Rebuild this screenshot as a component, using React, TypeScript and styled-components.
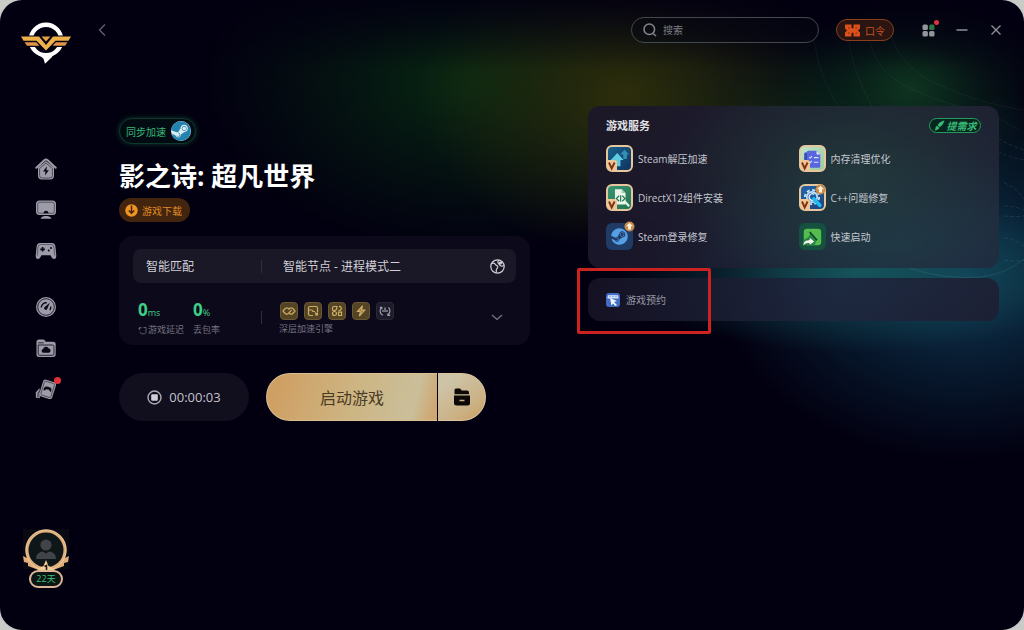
import React from "react";
import styled, { createGlobalStyle } from "styled-components";
import { FaSteam } from "react-icons/fa";

const GlobalStyle = createGlobalStyle`
  *, *::before, *::after { box-sizing: border-box; }
  body {
    margin: 0;
    background: #c9cbc9;
    font-family: "Open Sans", "Noto Sans", "Noto Sans CJK SC", sans-serif;
    color: #d3d3dc;
  }
  button, input { font: inherit; color: inherit; }
  button { border: 0; padding: 0; background: none; cursor: pointer; }
  h1, h2, p, ul, dl, dd { margin: 0; padding: 0; }
  ul { list-style: none; }
  svg { display: block; flex: none; }
`;

const Window = styled.div`
  position: relative;
  isolation: isolate;
  display: grid;
  grid-template-columns: 92px 1fr;
  min-height: 100vh;
  border-radius: 22px;
  overflow: hidden;
  background:
    linear-gradient(rgba(2, 0, 16, 0.85), transparent 11%),
    radial-gradient(ellipse 13% 15% at 89% 14%, rgba(18, 66, 36, 0.75), rgba(18, 66, 36, 0.28) 50%, transparent),
    radial-gradient(ellipse 20% 25% at 61% 15%, rgba(52, 50, 10, 0.85), rgba(52, 50, 10, 0.4) 50%, transparent),
    radial-gradient(ellipse 26% 27% at 46% 13%, rgba(8, 44, 18, 0.9), rgba(8, 44, 18, 0.4) 50%, transparent),
    radial-gradient(ellipse 25% 20% at 78% 24%, rgba(10, 56, 30, 0.7), rgba(10, 56, 30, 0.3) 50%, transparent),
    radial-gradient(ellipse 24% 13% at 84% 43%, rgba(22, 88, 94, 0.95), rgba(22, 88, 94, 0.4) 50%, transparent),
    radial-gradient(ellipse 24% 29% at 94% 44%, rgba(16, 64, 92, 0.85), rgba(16, 64, 92, 0.4) 50%, transparent),
    #020010;
`;

const Waves = styled.svg`
  position: absolute;
  z-index: -1;
  top: 0;
  right: 0;
  fill: none;
  stroke: rgba(130, 190, 200, 0.13);
`;

const Sidebar = styled.aside`
  display: flex;
  flex-direction: column;
  align-items: center;
  padding: 20px 0 42px;
`;

const Nav = styled.nav`
  display: flex;
  flex-direction: column;
  gap: 32px;
  margin-top: 92px;
`;

const NavGroup = styled.ul`
  display: grid;
  gap: 17px;
`;

const NavButton = styled.button`
  position: relative;
  display: grid;
  place-items: center;
  width: 24px;
  height: 24px;
`;

const Dot = styled.span<{ $size: number }>`
  position: absolute;
  top: ${(p) => (p.$size > 6 ? 0 : -2)}px;
  right: -3px;
  width: ${(p) => p.$size}px;
  height: ${(p) => p.$size}px;
  border-radius: 50%;
  background: #e2303b;
`;

const Profile = styled.button`
  display: flex;
  flex-direction: column;
  align-items: center;
  margin-top: auto;
`;

const Days = styled.span`
  width: 34px;
  margin-top: -4px;
  border: 2px solid #dcb795;
  border-radius: 9px;
  background: #0c1514;
  color: #35c274;
  font-size: 9px;
  line-height: 14px;
  text-align: center;
`;

const Main = styled.main`
  min-width: 0;
  padding-right: 20px;
`;

const TopBar = styled.header`
  display: flex;
  align-items: center;
  height: 60px;
  color: #8f9099;
`;

const BackButton = styled.button`
  display: grid;
  place-items: center;
  width: 20px;
  height: 24px;
  margin-right: auto;
  color: #5c5b69;
`;

const SearchBox = styled.label`
  display: flex;
  align-items: center;
  gap: 6px;
  width: 188px;
  height: 26px;
  padding: 0 11px;
  border: 1px solid #43484c;
  border-radius: 13px;
  background: rgba(8, 10, 20, 0.4);
  input {
    min-width: 0;
    flex: 1;
    padding: 0;
    border: 0;
    outline: 0;
    background: none;
    font-size: 10px;
  }
  input::placeholder { color: #7d7f84; opacity: 1; }
`;

const CodeButton = styled.button`
  display: flex;
  align-items: center;
  justify-content: center;
  gap: 5px;
  width: 58px;
  height: 22px;
  margin: 0 26px 0 17px;
  border: 1px solid #8a3e1c;
  border-radius: 11px;
  background: #2a1512;
  color: #c9531f;
  font-size: 10px;
`;

const WindowControls = styled.div`
  display: flex;
  gap: 18px;
`;

const ControlButton = styled.button`
  position: relative;
  display: grid;
  place-items: center;
  width: 16px;
  height: 16px;
`;

const Columns = styled.div`
  display: grid;
  grid-template-columns: 1fr 1fr;
  gap: 58px;
  align-items: start;
  padding: 46px 5px 0 27px;
`;

const GamePanel = styled.section`
  display: flex;
  flex-direction: column;
  align-items: flex-start;
  padding-top: 12px;
`;

const SyncBadge = styled.button`
  display: flex;
  align-items: center;
  gap: 5px;
  height: 26px;
  padding: 0 4px 0 6px;
  border: 1px solid #0d3a2b;
  border-radius: 13px;
  background: #030b12;
  box-shadow: 0 0 4px 1px rgba(22, 94, 60, 0.4);
  color: #37b877;
  font-size: 10px;
`;

const SteamMark = styled.span`
  display: grid;
  place-items: center;
  width: 20px;
  height: 20px;
  border-radius: 50%;
  background: #dcebf3;
  color: #2382ae;
`;

const Title = styled.h1`
  margin-top: 14px;
  color: #fff;
  font-size: 26px;
  font-weight: 700;
  line-height: 36px;
`;

const DownloadButton = styled.button`
  display: flex;
  align-items: center;
  gap: 4px;
  height: 24px;
  margin-top: 4px;
  padding: 0 8px 0 6px;
  border-radius: 12px;
  background: #42240f;
  color: #e08b22;
  font-size: 10px;
`;

const RouteCard = styled.div`
  width: 100%;
  margin-top: 14px;
  padding: 13px 14px 9px;
  border-radius: 14px;
  background: #0c091b;
`;

const RouteRow = styled.div`
  display: grid;
  grid-template-columns: 128px 1px 1fr 38px;
  align-items: center;
  height: 34px;
  border-radius: 8px;
  background: #1a1726;
  color: #d0cfd8;
  font-size: 12px;
`;

const RouteButton = styled.button<{ $indent: number }>`
  padding-left: ${(p) => p.$indent}px;
  text-align: left;
`;

const IconButton = styled.button`
  display: grid;
  place-items: center;
  height: 24px;
`;

const Divider = styled.span`
  height: 13px;
  background: #302d3c;
`;

const StatsRow = styled.div`
  display: grid;
  grid-template-columns: 128px 1px 1fr 38px;
  align-items: center;
  margin-top: 16px;
  color: #74737f;
`;

const Stats = styled.dl`
  display: flex;
  gap: 9px;
  padding-left: 5px;
`;

const Stat = styled.div`
  display: flex;
  flex-direction: column-reverse;
`;

const StatValue = styled.dd`
  color: #3fce85;
  font-size: 9px;
  line-height: 22px;
  strong { font-size: 17px; }
`;

const Caption = styled.dt`
  display: flex;
  align-items: center;
  gap: 1px;
  font-size: 9px;
  line-height: 12px;
  white-space: nowrap;
`;

const Engine = styled.div`
  padding-left: 17px;
  p { font-size: 9px; line-height: 12px; }
`;

const EngineIcons = styled.ul`
  display: flex;
  gap: 6px;
  height: 22px;
  padding: 1px 0 0 1px;
`;

const EngineTile = styled.li<{ $off?: boolean }>`
  display: grid;
  place-items: center;
  width: 18px;
  height: 18px;
  border: 1px solid ${(p) => (p.$off ? "#2b2937" : "#6b5833")};
  border-radius: 4px;
  background: ${(p) => (p.$off ? "#1d1a2a" : "#544426")};
  color: ${(p) => (p.$off ? "#a2a1ad" : "#cfae64")};
`;

const Actions = styled.div`
  display: flex;
  gap: 17px;
  margin-top: 28px;
`;

const TimerButton = styled.button`
  display: flex;
  align-items: center;
  justify-content: center;
  gap: 7px;
  width: 130px;
  height: 48px;
  border-radius: 24px;
  background: #110e1e;
  color: #c4c3cc;
  font-size: 13px;
`;

const LaunchGroup = styled.div`
  display: flex;
  gap: 1px;
`;

const LaunchButton = styled.button`
  width: 171px;
  height: 48px;
  border: 1px solid #dcbe94;
  border-right: 0;
  border-radius: 24px 0 0 24px;
  background: linear-gradient(105deg, #cfa064 8%, #cdb482 50%, #cabf9a 85%, #cfa772 97%);
  color: #4a3b25;
  font-size: 16px;
`;

const FolderButton = styled.button`
  display: grid;
  place-items: center;
  width: 48px;
  height: 48px;
  border: 1px solid #dcc59e;
  border-left: 0;
  border-radius: 0 24px 24px 0;
  background: linear-gradient(145deg, #cdc3a6 20%, #cbb184 70%, #c99d60);
`;

const ServicePanel = styled.div`
  display: grid;
  gap: 10px;
`;

const ServiceCard = styled.section`
  height: 162px;
  padding: 12px 18px;
  border-radius: 12px;
  background:
    radial-gradient(ellipse 45% 75% at 64% 42%, rgba(38, 72, 66, 0.6), transparent),
    radial-gradient(ellipse 55% 60% at 75% 85%, rgba(32, 68, 86, 0.5), transparent),
    linear-gradient(100deg, rgba(27, 23, 42, 0.94), rgba(34, 34, 54, 0.88));
`;

const CardHead = styled.div`
  display: flex;
  justify-content: space-between;
  align-items: center;
  height: 15px;
  h2 { color: #e2e2e6; font-size: 11px; font-weight: 700; line-height: 15px; }
`;

const RequestButton = styled.button`
  display: flex;
  align-items: center;
  justify-content: center;
  gap: 2px;
  width: 52px;
  height: 15px;
  border: 1px solid #279a5c;
  border-radius: 8px;
  background: #06251f;
  color: #37b874;
  font-size: 10px;
  font-style: italic;
  font-weight: 700;
  line-height: 12px;
  white-space: nowrap;
`;

const ServiceGrid = styled.ul`
  display: grid;
  grid-template-columns: 1fr 1fr;
  gap: 12px 10px;
  margin-top: 12px;
`;

const ServiceButton = styled.button`
  display: flex;
  align-items: center;
  gap: 5px;
  color: #c5c8d0;
  font-size: 10px;
  line-height: 16px;
`;

const Tile = styled.span<{ $bg: string; $gold?: boolean }>`
  position: relative;
  display: grid;
  place-items: center;
  width: 27px;
  height: 27px;
  border: ${(p) => (p.$gold ? "2px solid #e6c69c" : "0")};
  border-radius: 6px;
  background: ${(p) => p.$bg};
`;

const VipCorner = styled.svg`
  position: absolute;
  left: -1px;
  bottom: -1px;
`;

const UpBadge = styled.svg`
  position: absolute;
  top: -2px;
  right: -2px;
`;

const BookingCard = styled.section`
  position: relative;
  display: flex;
  align-items: center;
  height: 43px;
  padding: 0 18px;
  border-radius: 12px;
  background: linear-gradient(100deg, rgba(22, 18, 36, 0.95), rgba(30, 38, 62, 0.9) 60%, rgba(30, 30, 50, 0.9));
`;

const BookingButton = styled.button`
  display: flex;
  align-items: center;
  gap: 6px;
  color: #9a9ba6;
  font-size: 10px;
`;

const Highlight = styled.span`
  position: absolute;
  top: -10px;
  left: -11px;
  width: 134px;
  height: 66px;
  border: 3px solid #cc2320;
  border-radius: 2px;
  pointer-events: none;
`;

const grey = "#9c9ba8";
const dark = "#0b0919";
const seam = "#45434f";

const navIcons: Record<string, React.ReactNode> = {
  首页: (
    <>
      <path d="M3 9.500v8q0 4 4 4h8q4 0 4-4v-8L11 3Z" fill={grey} />
      <path d="M1.300 9.800 9.300 2.200q1.700-1.300 3.400 0l8 7.600" fill="none" stroke={grey} strokeWidth="2" strokeLinecap="round" strokeLinejoin="round" />
      <path d="M4.600 10.500 11 5l6.400 5.500v7q0 2.500-2.500 2.500H7.100q-2.500 0-2.500-2.500Z" fill="none" stroke={seam} strokeWidth=".9" />
      <path d="m11.900 8.300-3.900 5.200h2.400l-.4 4 3.900-5.300h-2.500Z" fill={dark} />
    </>
  ),
  电脑: (
    <>
      <rect x="1" y="1.500" width="20" height="14.500" rx="3.500" fill={grey} />
      <rect x="2.700" y="3.200" width="16.600" height="11.100" rx="2" fill="none" stroke={seam} strokeWidth=".8" />
      <path d="M8.500 14.300a2.500 2.500 0 0 1 5 0Z" fill={dark} />
      <path d="M9.500 17h3q3.500.8 3.800 2.800H5.700Q6 17.800 9.500 17Z" fill={grey} />
    </>
  ),
  手柄: (
    <>
      <path d="M5 3h12q3 0 3.500 4l.8 8.500q0 3.500-2.300 3.500-1.600 0-2.500-2l-1-1.800h-9L5.500 17q-.9 2-2.500 2Q.7 19 .7 15.500L1.500 7Q2 3 5 3Z" fill={grey} />
      <path d="M2.300 15.500 3 7.500q.4-3 2.700-3h10.600q2.300 0 2.700 3l.7 8" fill="none" stroke={seam} strokeWidth=".7" />
      <path d="M7.600 7v4.600M5.300 9.300h4.600" stroke={dark} strokeWidth="1.700" />
      <circle cx="16" cy="8" r="1" fill={dark} />
      <circle cx="13.700" cy="10.400" r="1" fill={dark} />
    </>
  ),
  测速: (
    <>
      <circle cx="11" cy="11" r="10" fill={grey} />
      <circle cx="11" cy="11" r="8.300" fill="none" stroke={dark} strokeWidth=".8" />
      <path d="M6.300 11.500a4.700 4.700 0 0 1 5.500-4.600M15.700 10.500q.2 2-.8 3.500" fill="none" stroke={dark} strokeWidth="1.400" />
      <path d="m14.800 6.800-2.400 5.800a1.700 1.700 0 1 1-2.800-1.700Z" fill={dark} />
    </>
  ),
  文件: (
    <>
      <path d="M1.500 17.500V5Q1.500 2.500 4 2.500h4q1.300 0 1.900 1.100l.7 1.200H18q2.700 0 2.700 2.700v9.800q0 2.700-2.700 2.700H4.200q-2.700 0-2.700-2.500Z" fill={grey} />
      <path d="M3.200 5.800h5.500M3.200 8h14.300q1.500 0 1.500 1.500v7.300q0 1.500-1.500 1.500H4.700q-1.500 0-1.500-1.500Z" fill="none" stroke={dark} strokeWidth=".8" />
      <path d="M8.200 15.800a2 2 0 0 1-.1-3.900 2.900 2.900 0 0 1 5.300-.7 2.400 2.400 0 0 1 .7 4.600Z" fill={dark} />
    </>
  ),
  活动: (
    <>
      <path d="M4.500 10 .8 14.500v5.200l4 .5Z" fill={grey} />
      <path d="m4.500 13-1.500 2.500v4" fill="none" stroke={dark} strokeWidth=".8" />
      <rect x="6" y="2.500" width="13.500" height="17.500" rx="2.600" transform="rotate(17 12.500 11)" fill={grey} />
      <rect x="7.500" y="4" width="10.500" height="14.500" rx="1.500" transform="rotate(17 12.500 11)" fill="none" stroke={seam} strokeWidth=".8" />
      <path d="M9.900 8.700q3.200-1 6.200 1.200.7 1.700 0 3.900-.8.500-2.200-2l-2.200-.5q-2.500 1.600-3.200.9-.2-2 1.400-3.500Z" fill={dark} />
    </>
  ),
};

function NavItem({ name, dot }: { name: string; dot?: boolean }) {
  return (
    <li>
      <NavButton type="button" aria-label={name}>
        <svg width="22" height="22" viewBox="0 0 22 22">{navIcons[name]}</svg>
        {dot && <Dot $size={7} />}
      </NavButton>
    </li>
  );
}

function Logo() {
  return (
    <svg width="50" height="45" viewBox="0 0 50 45" role="img" aria-label="logo">
      <circle cx="25" cy="20" r="15.300" fill="none" stroke="#fff" strokeWidth="4.400" />
      <path d="M17 34h15l-1 3-7 6.800-1.500-5Z" fill="#fff" />
      <path d="M0 15.500h20l5 6.500 5-6.500h20l-4 11.500H33L25 32l-8-5H4Z" fill="#020010" />
      <path d="M0 16.500h18l7 8.500 7-8.500h18l-2.500 4.300H34.500L25 30.500l-9.500-9.700H2.500Z" fill="#eeb04a" />
      <path d="M3.500 22.300h11.700l3.300 3.400H6ZM46.500 22.300H34.800l-3.300 3.400H44Z" fill="#e29448" />
      <path d="M20.500 16.500h9L25 21.500Z" fill="#e6a03c" />
    </svg>
  );
}

function Avatar() {
  return (
    <svg width="48" height="45" viewBox="0 0 48 45" role="img" aria-label="头像">
      <path d="M1 0h46v40H1Z" fill="#080911" />
      <path d="m1 27 4 2 5 4 7 5 4 4h6l4-4 7-5 5-4 4-2-1 6-4 1v3l-8 3-7 3.500h-6L14 40l-8-3v-3l-4-1Z" fill="#e0ad76" />
      <circle cx="24" cy="21" r="19" fill="#0e1618" stroke="#dfb07d" strokeWidth="3" />
      <circle cx="24" cy="21" r="20.200" fill="none" stroke="#f5d9b0" strokeWidth=".7" />
      <circle cx="24" cy="16" r="5.600" fill="#404348" />
      <path d="M14 30q0-7 7-7.500l3 2 3-2q7 .5 7 7.500Z" fill="#404348" />
      <path d="m24 31 2.500 6 5.500 2.500-5.500 4.500h-5L16 39.500l5.500-2.500Z" fill="#f2cd98" />
      <path d="m22.500 37.500 2-1V43" fill="none" stroke="#271b13" strokeWidth="1.600" />
    </svg>
  );
}

const engineIcons = [
  <path key="a" d="M7.500 5.500 6 4.200q-1.200-.8-2.400 0L1.500 6.200q-.8.800 0 1.600l2.100 2q1.200.8 2.400 0l3.500-3.600M6.500 8.500 8 9.800q1.200.8 2.400 0l2.100-2q.8-.8 0-1.600l-2.100-2q-1.200-.8-2.400 0L6.500 5.700" />,
  <path key="b" d="M7 11.500H4Q2.500 11.500 2.500 10V4Q2.500 2.500 4 2.500h6Q11.500 2.500 11.500 4v4M3 6h2.500q1.500 0 1.500 1.500h2M9 8.500l2.500 2.500M11.500 8.500V11H9" />,
  <path key="c" d="M7 2.500H4Q2.500 2.500 2.500 4v2L4 7l2.500-1.500ZM9 2.500a2 2 0 1 1-.5 3.800M2.500 9.500a2 2 0 1 0 4 0 2 2 0 0 0-4 0M8.500 8.200h3v3.300h-3Z" />,
  <path key="d" d="M8.500 1.800 3.500 7.500h3L5.300 12.200l5.400-6h-3.200Z" fill="currentColor" fillOpacity=".5" />,
  <path key="e" d="M3.500 3.300a5 5 0 0 0 1.300 8M10.500 3.300a5 5 0 0 1-1.300 8M1.800 3.300h2v2M12.200 11.300h-2v-2M7 3.500v4.500M5 6v2M9 6v2" />,
];

function Vip() {
  return (
    <VipCorner width="11" height="11" viewBox="0 0 11 11">
      <path d="M0 0h7q3 0 3 3v7H3q-3 0-3-3Z" fill="#f0c696" />
      <path d="m2 2.500 2.700 6 2.900-6" fill="none" stroke="#7c3214" strokeWidth="1.900" />
    </VipCorner>
  );
}

function Up() {
  return (
    <UpBadge width="11" height="11" viewBox="0 0 11 11">
      <circle cx="5.500" cy="5.500" r="5" fill="#c68a4c" />
      <path d="M5.500 1.800 9 5.300H7v3.200H4V5.300H2Z" fill="#fff0d5" />
    </UpBadge>
  );
}

const services = [
  {
    name: "Steam解压加速", bg: "linear-gradient(135deg,#17618c,#12335f)", gold: true,
    art: (
      <>
        <path d="M9 5.500 16 13h-3.500v7h-6v-7H2Z" fill="#5ecbe0" />
        <path d="m17 2 5 5h-2.500v5h-4V7H12Z" fill="#318fb0" />
      </>
    ),
  },
  {
    name: "内存清理优化", bg: "linear-gradient(135deg,#bde3c5,#9dcaa4)", gold: true,
    art: (
      <>
        <path d="M5 5h5v15H5q-1.500 0-1.500-1.500V6.500Q3.500 5 5 5Z" fill="#3c49b8" />
        <path d="M8 3h9l4 4v13q0 1.500-1.500 1.500H8Q6.500 21.500 6.500 20V4.500Q6.500 3 8 3Z" fill="#5866df" />
        <path d="m17 3 4 4h-4Z" fill="#e5eaff" />
        <path d="m9 10 1 1 2-2M14 10.500h5M9 15l1 1 2-2M14 15.500h5" fill="none" stroke="#dfe5ff" strokeWidth="1.200" />
      </>
    ),
  },
  {
    name: "DirectX12组件安装", bg: "linear-gradient(135deg,#399472,#247453)", gold: true,
    art: (
      <>
        <path d="M6.500 2.500h7.500l4 4V19H6.500Z" fill="#eaf5e9" />
        <path d="m14 2.500 4 4h-4Z" fill="#98c8a8" />
        <path d="m11 9.500-3 3 3 3M12.700 9v7M14.500 9.500l3 3-3 3" fill="none" stroke="#267553" strokeWidth="1.300" />
        <path d="m17 15.500 5 5.500" stroke="#eaf5e9" strokeWidth="2.200" />
      </>
    ),
  },
  {
    name: "C++问题修复", bg: "linear-gradient(135deg,#2364a8,#1d447d)", gold: true, up: true,
    art: (
      <>
        <circle cx="12" cy="11" r="7.800" fill="none" stroke="#c5e3fa" strokeWidth="2" strokeDasharray="3.500 2.600" />
        <circle cx="12" cy="11" r="5.700" fill="#205ba0" stroke="#c5e3fa" strokeWidth="1.800" />
        <path d="M14.500 8a3.600 3.600 0 1 0 0 6" fill="none" stroke="#e5f3ff" strokeWidth="1.500" />
        <path d="m14 13 6.500 7" stroke="#20bdf0" strokeWidth="4" strokeLinecap="round" />
      </>
    ),
  },
  {
    name: "Steam登录修复", bg: "#203b66", up: true,
    art: null,
  },
  {
    name: "快速启动", bg: "#16513f",
    art: (
      <>
        <rect x="3" y="3" width="19" height="18" rx="3.500" fill="#54bd4e" />
        <path d="M3 15q7-3 7-8l7 8-2 6H6.500Q3 21 3 17Z" fill="#248d42" />
        <path d="m9.500 6.500 8 9" stroke="#123f2c" strokeWidth="1.700" />
        <path d="M2 22q0-7 7-7v-3l6 5-6 4.500V19q-4-.5-7 3Z" fill="#effbea" stroke="#1d5e3d" strokeWidth=".8" />
      </>
    ),
  },
];

export default function App() {
  return (
    <>
      <GlobalStyle />
      <Window>
        <Waves width="260" height="320" viewBox="0 0 260 320" aria-hidden="true">
          <path d="M50 40q5 40 30 75M85 35q0 30 25 75M105 30q0 40 45 60t70 20l35 20M125 25q5 40 50 60t85 25" strokeOpacity=".5" />
          <path d="M215 116q8 22 45 34M220 140q10 14 40 20M240 183q12 4 20 16M240 206q10 0 20 4M240 216q10 1 20 0M240 238q10 1 20 8M240 260q12 2 20 0" strokeDasharray="4 2" />
          <path d="M145 268q35 12 72 9 25-3 43-18" strokeOpacity="2" />
        </Waves>

        <Sidebar>
          <Logo />
          <Nav>
            <NavGroup>
              <NavItem name="首页" />
              <NavItem name="电脑" />
              <NavItem name="手柄" />
            </NavGroup>
            <NavGroup>
              <NavItem name="测速" />
              <NavItem name="文件" />
              <NavItem name="活动" dot />
            </NavGroup>
          </Nav>
          <Profile type="button">
            <Avatar />
            <Days>22天</Days>
          </Profile>
        </Sidebar>

        <Main>
          <TopBar>
            <BackButton type="button" aria-label="返回">
              <svg width="8" height="14" viewBox="0 0 8 14" fill="none" stroke="currentColor" strokeWidth="1.500"><path d="M7 1.500 1.500 7 7 12.500" /></svg>
            </BackButton>
            <SearchBox>
              <svg width="14" height="14" viewBox="0 0 14 14" fill="none" stroke="#85868c" strokeWidth="1.500"><circle cx="6.300" cy="6.300" r="5.300" /><path d="m10 10.500 3 2.500" /></svg>
              <input type="search" placeholder="搜索" aria-label="搜索" />
            </SearchBox>
            <CodeButton type="button">
              <svg width="15" height="13" viewBox="0 0 15 13" fill="#dc501b">
                <path d="M0 .5h6.500v3.200L7.500 4.500l1-.8V.5H15v4l-2 2 2 2v4H8.500V9.300l-1-.8-1 .8v3.200H0v-4l2-2-2-2Z" />
                <path d="M3 4h1.500M10.500 4H12M3 9h1.500M10.500 9H12" stroke="#61230f" strokeWidth=".8" />
              </svg>
              口令
            </CodeButton>
            <WindowControls>
              <ControlButton type="button" aria-label="应用">
                <svg width="13" height="13" viewBox="0 0 13 13" fill="#92959a">
                  <rect x=".5" y=".5" width="5.400" height="5.400" rx="1.500" /><rect x="7.100" y=".5" width="5.400" height="5.400" rx="1.500" fill="#2e7547" />
                  <rect x=".5" y="7.100" width="5.400" height="5.400" rx="1.500" /><rect x="7.100" y="7.100" width="5.400" height="5.400" rx="1.500" />
                </svg>
                <Dot $size={5} />
              </ControlButton>
              <ControlButton type="button" aria-label="最小化">
                <svg width="12" height="12" viewBox="0 0 12 12" stroke="currentColor" strokeWidth="1.500"><path d="M.5 6h11" /></svg>
              </ControlButton>
              <ControlButton type="button" aria-label="关闭">
                <svg width="12" height="12" viewBox="0 0 12 12" stroke="currentColor" strokeWidth="1.400"><path d="m1.500 1.500 9 9m0-9-9 9" /></svg>
              </ControlButton>
            </WindowControls>
          </TopBar>

          <Columns>
            <GamePanel>
              <SyncBadge type="button">
                同步加速
                <SteamMark><FaSteam size={20} /></SteamMark>
              </SyncBadge>
              <Title>影之诗: 超凡世界</Title>
              <DownloadButton type="button">
                <svg width="13" height="13" viewBox="0 0 13 13"><circle cx="6.500" cy="6.500" r="6.200" fill="#ef9423" /><path d="M6.500 1.500v7M3.800 6.500l2.700 2.700 2.700-2.700" fill="none" stroke="#42240f" strokeWidth="1.500" /></svg>
                游戏下载
              </DownloadButton>

              <RouteCard>
                <RouteRow>
                  <RouteButton type="button" $indent={13}>智能匹配</RouteButton>
                  <Divider />
                  <RouteButton type="button" $indent={21}>智能节点 - 进程模式二</RouteButton>
                  <IconButton type="button" aria-label="切换节点">
                    <svg width="15" height="15" viewBox="0 0 15 15" fill="none" stroke="#d3d2d9" strokeWidth="1.200">
                      <circle cx="7.500" cy="7.500" r="6.700" /><path d="M2 4.500q2-1 3 .5t2.500 2q1 1-.5 2.500t-.5 4M8.500 1q-1.500 3 1 4.500L12 2.500M9.500 5.500q1 2.500 4.500 1" /><circle cx="10.300" cy="4" r="1" />
                    </svg>
                  </IconButton>
                </RouteRow>
                <StatsRow>
                  <Stats>
                    <Stat>
                      <Caption>
                        <svg width="9" height="9" viewBox="0 0 9 9" fill="none" stroke="currentColor" strokeWidth=".8"><path d="M1.500 3.500V1.500h2M5.500 1.500H8v5L6.500 7.800h-3L1.500 6M.5 2.500l1 1 1-1" /></svg>
                        游戏延迟
                      </Caption>
                      <StatValue><strong>0</strong>ms</StatValue>
                    </Stat>
                    <Stat>
                      <Caption>丢包率</Caption>
                      <StatValue><strong>0</strong>%</StatValue>
                    </Stat>
                  </Stats>
                  <Divider />
                  <Engine>
                    <EngineIcons>
                      {engineIcons.map((icon, i) => (
                        <EngineTile key={i} $off={i === 4}>
                          <svg width="14" height="14" viewBox="0 0 14 14" fill="none" stroke="currentColor" strokeWidth="1.200">{icon}</svg>
                        </EngineTile>
                      ))}
                    </EngineIcons>
                    <p>深层加速引擎</p>
                  </Engine>
                  <IconButton type="button" aria-label="展开">
                    <svg width="12" height="7" viewBox="0 0 12 7" fill="none" stroke="#77767f" strokeWidth="1.300"><path d="m1 1 5 4.500L11 1" /></svg>
                  </IconButton>
                </StatsRow>
              </RouteCard>

              <Actions>
                <TimerButton type="button">
                  <svg width="15" height="15" viewBox="0 0 15 15"><circle cx="7.500" cy="7.500" r="6.500" fill="none" stroke="#aaa9b3" strokeWidth="1.400" /><rect x="4.200" y="4.200" width="6.600" height="6.600" rx="1" fill="#d0cfd6" /></svg>
                  00:00:03
                </TimerButton>
                <LaunchGroup>
                  <LaunchButton type="button">启动游戏</LaunchButton>
                  <FolderButton type="button" aria-label="打开文件夹">
                    <svg width="18" height="18" viewBox="0 0 18 18" fill="#0b0806">
                      <path d="M1.500 6.200V2Q1.500.5 3 .5h3.500q1 0 1.500 1l.5 1H14q2 0 2 2v1.700Z" />
                      <path d="M1 7.500h16v7.500q0 2.500-2.500 2.500h-11Q1 17.500 1 15Z" />
                      <path d="M6.500 12.500h5" stroke="#cbb184" strokeWidth="1.500" />
                    </svg>
                  </FolderButton>
                </LaunchGroup>
              </Actions>
            </GamePanel>

            <ServicePanel>
              <ServiceCard>
                <CardHead>
                  <h2>游戏服务</h2>
                  <RequestButton type="button">
                    <svg width="11" height="11" viewBox="0 0 11 11" fill="#37b874"><path d="M10.500.5Q6 1 3.500 5.200L6 7.200Q9.500 5 10.500.5ZM3 5.800 5.400 7.800Q4 10.500.5 10.500 1.800 9 1.500 7.500 2 6.200 3 5.800Z" /></svg>
                    提需求
                  </RequestButton>
                </CardHead>
                <ServiceGrid>
                  {services.map((s) => (
                    <li key={s.name}>
                      <ServiceButton type="button">
                        <Tile $bg={s.bg} $gold={s.gold}>
                          {s.art ? <svg width="22" height="22" viewBox="0 0 24 24">{s.art}</svg> : <FaSteam size={17} color="#559fe6" />}
                          {s.gold && <Vip />}
                          {s.up && <Up />}
                        </Tile>
                        {s.name}
                      </ServiceButton>
                    </li>
                  ))}
                </ServiceGrid>
              </ServiceCard>
              <BookingCard>
                <BookingButton type="button">
                  <svg width="14" height="14" viewBox="0 0 14 14"><rect width="14" height="14" rx="3" fill="#416dc5" /><path d="M1.500 4 2.500 2h9l1 2v1.500H1.500Z" fill="#d4e1fb" /><path d="M4 2.500v1.500M7 2.500v1.500M10 2.500v1.500" stroke="#416dc5" strokeWidth=".8" /><path d="m4 5 7 3-3 1 3 3-1.500 1L7 10.500 5.500 12.500Z" fill="#f5f8ff" /></svg>
                  游戏预约
                </BookingButton>
                <Highlight />
              </BookingCard>
            </ServicePanel>
          </Columns>
        </Main>
      </Window>
    </>
  );
}
